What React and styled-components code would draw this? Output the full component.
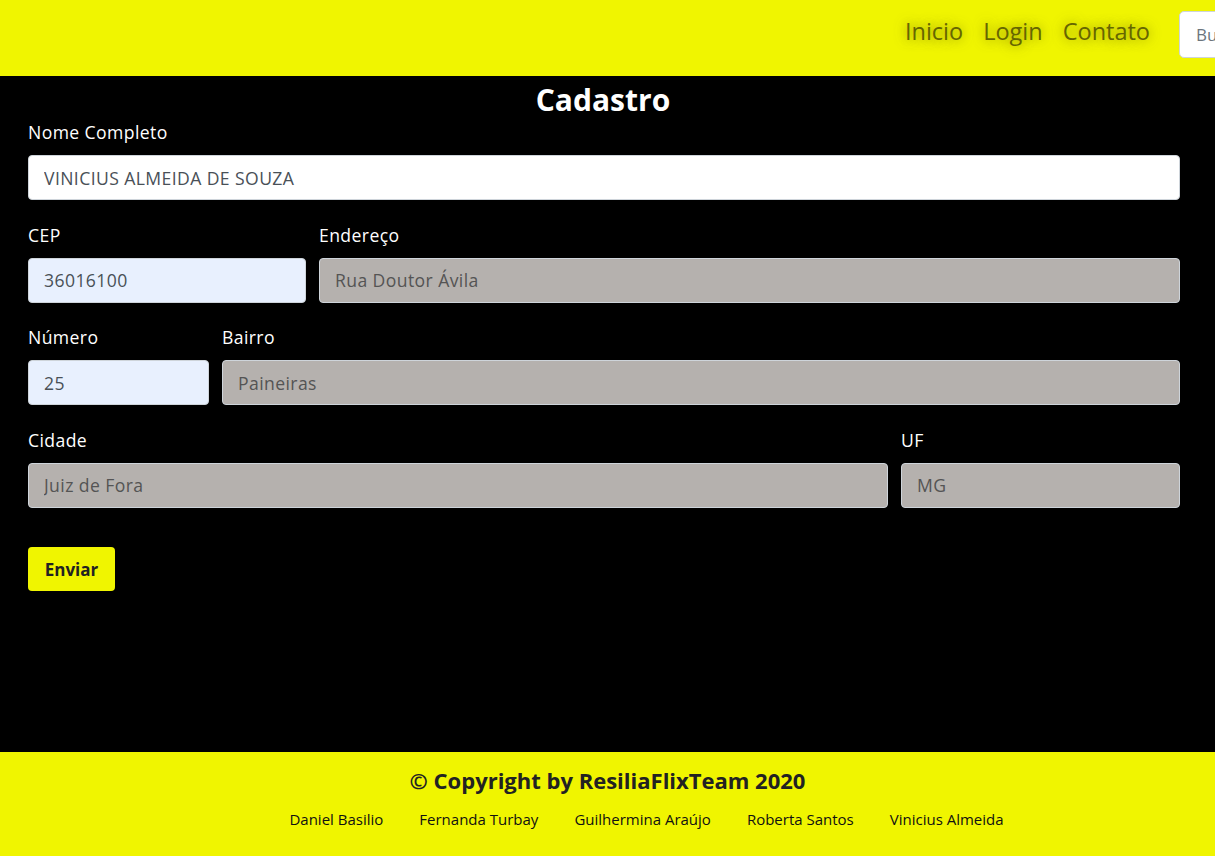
import React from "react";
import styled, { createGlobalStyle } from "styled-components";

const Global = createGlobalStyle`
  html, body { margin: 0; padding: 0; overflow: hidden; background: #000; }
  body { font-family: "Open Sans", "Noto Sans", sans-serif; }
  * { box-sizing: border-box; }
`;

const Header = styled.header`
  height: 76px;
  background: #f0f500;
  display: flex;
  align-items: flex-start;
  justify-content: flex-end;
  margin-right: -60px;
`;

const Nav = styled.nav`
  display: flex;
  align-items: center;
  margin-top: 14px;
  margin-right: 19px;
`;

const NavLink = styled.a`
  font-size: 23.5px;
  line-height: 34px;
  color: #666600;
  text-decoration: none;
  padding: 0 10px;
  text-shadow: 0 0 12px rgba(95, 95, 0, 0.75);
`;

const Search = styled.input`
  width: 96px;
  height: 47px;
  margin-top: 11px;
  border: 1px solid #ced4da;
  border-radius: 5px;
  background: #fff;
  font-family: inherit;
  font-size: 17px;
  padding: 0 16px;
  color: #495057;
  &::placeholder { color: #6c757d; }
`;

const Main = styled.main`
  height: 676px;
  background: #000;
  padding: 5px 35px 0 28px;
`;

const Title = styled.h1`
  margin: 0;
  text-align: center;
  color: #fff;
  font-size: 30px;
  font-weight: 700;
  line-height: 38px;
  margin-right: 2px;
`;

const Form = styled.form`
  display: flex;
  flex-direction: column;
  gap: 22.5px;
  padding-top: 1px;
`;

const Row = styled.div`
  display: grid;
  grid-template-columns: ${(p) => p.$cols || "1fr"};
  column-gap: 13px;
`;

const Field = styled.div`
  display: flex;
  flex-direction: column;
`;

const Label = styled.label`
  color: #fff;
  font-size: 17.6px;
  letter-spacing: 0.4px;
  line-height: 24px;
  margin-bottom: 11px;
`;

const Input = styled.input`
  height: 45px;
  width: 100%;
  border: 1px solid #ced4da;
  border-radius: 4px;
  padding: 0 15px;
  font-family: inherit;
  font-size: 17.6px;
  letter-spacing: 0.4px;
  color: ${(p) => (p.disabled ? "#545454" : "#495057")};
  background: ${(p) => (p.$auto ? "#e8f0fe" : p.disabled ? "#b5b1ae" : "#fff")};
  outline: none;
`;

const Button = styled.button`
  align-self: flex-start;
  margin-top: 17px;
  height: 44px;
  width: 87px;
  padding: 0;
  background: #f0f500;
  border: none;
  border-radius: 4px;
  font-family: inherit;
  font-weight: 700;
  font-size: 17px;
  color: #222;
`;

const Footer = styled.footer`
  height: 104px;
  background: #f0f500;
  display: flex;
  flex-direction: column;
  align-items: center;
  padding-top: 13px;
`;

const Copy = styled.p`
  margin: 0;
  font-size: 22px;
  font-weight: 700;
  color: #222;
  line-height: 30px;
`;

const Names = styled.ul`
  list-style: none;
  margin: 13px 0 0 78px;
  padding: 0;
  display: flex;
  gap: 36px;
`;

const Name = styled.li`
  font-size: 15px;
  color: #111;
  line-height: 22px;
`;

const fields = [
  { cols: "1fr", items: [{ l: "Nome Completo", v: "VINICIUS ALMEIDA DE SOUZA" }] },
  { cols: "278px 1fr", items: [{ l: "CEP", v: "36016100", auto: true }, { l: "Endereço", v: "Rua Doutor Ávila", d: true }] },
  { cols: "181px 1fr", items: [{ l: "Número", v: "25", auto: true }, { l: "Bairro", v: "Paineiras", d: true }] },
  { cols: "1fr 279px", items: [{ l: "Cidade", v: "Juiz de Fora", d: true }, { l: "UF", v: "MG", d: true }] },
];

export default function App() {
  return (
    <>
      <Global />
      <Header>
        <Nav>
          <NavLink href="#">Inicio</NavLink>
          <NavLink href="#">Login</NavLink>
          <NavLink href="#">Contato</NavLink>
        </Nav>
        <Search placeholder="Buscar" />
      </Header>
      <Main>
        <Title>Cadastro</Title>
        <Form onSubmit={(e) => e.preventDefault()}>
          {fields.map((r, i) => (
            <Row key={i} $cols={r.cols}>
              {r.items.map((f) => (
                <Field key={f.l}>
                  <Label>{f.l}</Label>
                  <Input defaultValue={f.v} disabled={f.d} $auto={f.auto} />
                </Field>
              ))}
            </Row>
          ))}
          <Button type="submit">Enviar</Button>
        </Form>
      </Main>
      <Footer>
        <Copy>© Copyright by ResiliaFlixTeam 2020</Copy>
        <Names>
          {["Daniel Basilio", "Fernanda Turbay", "Guilhermina Araújo", "Roberta Santos", "Vinicius Almeida"].map((n) => (
            <Name key={n}>{n}</Name>
          ))}
        </Names>
      </Footer>
    </>
  );
}
